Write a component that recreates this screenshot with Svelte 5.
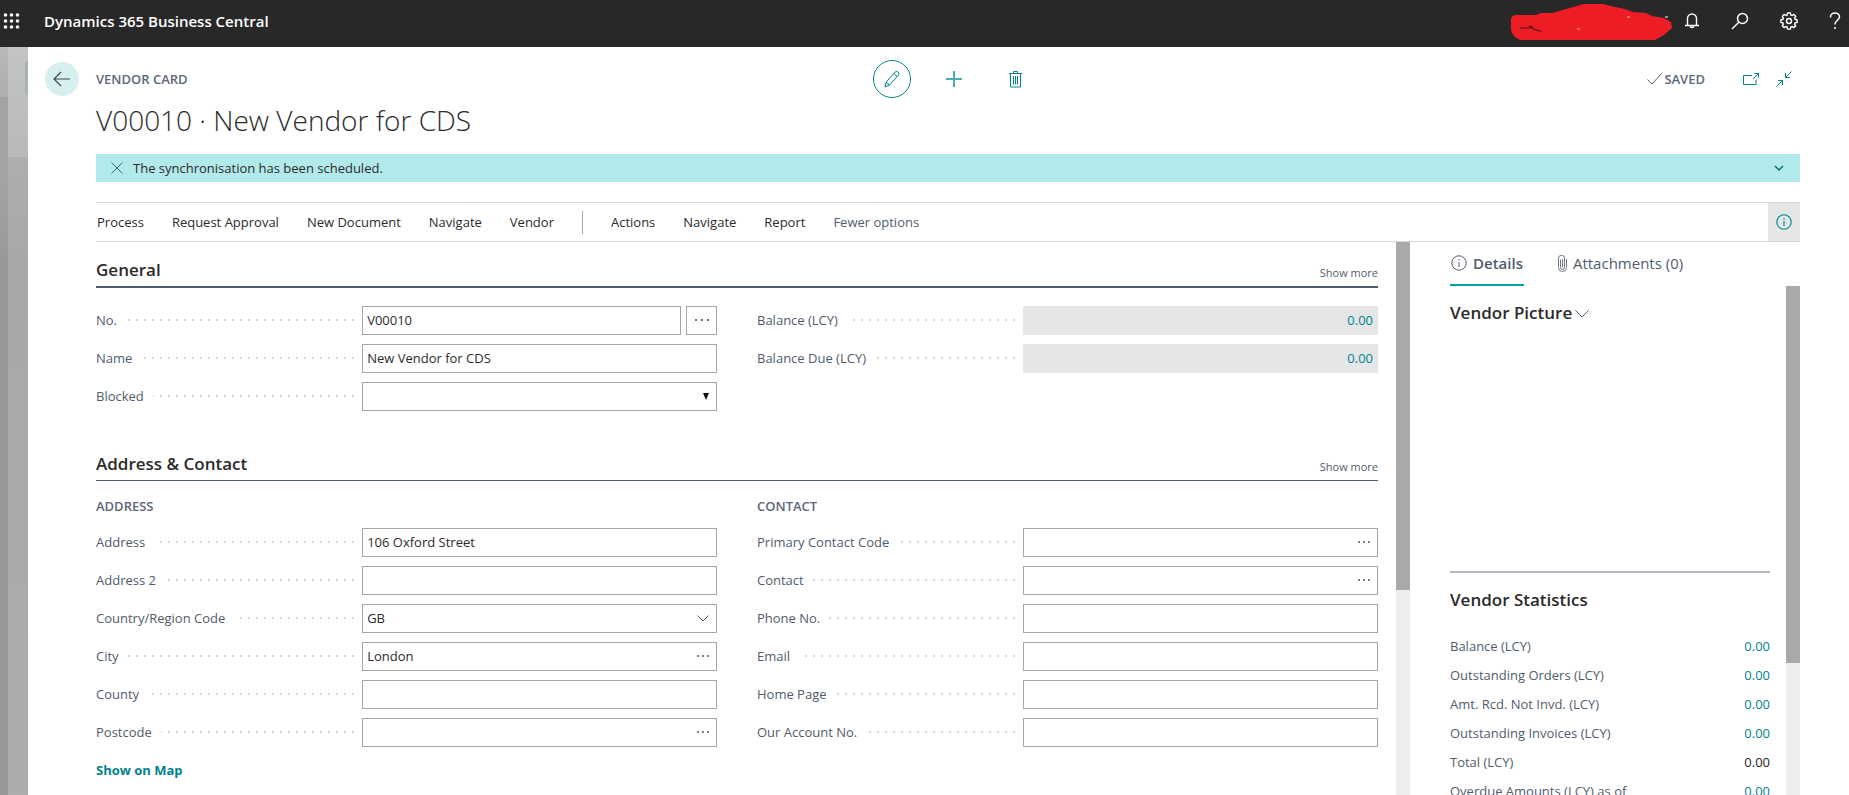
<script>
  let noticeOpen = true;
  let activeTab = 'details';

  const cardMenus = ['Process', 'Request Approval', 'New Document', 'Navigate', 'Vendor'];
  const pageMenus = ['Actions', 'Navigate', 'Report'];

  const sections = [
    {
      title: 'General',
      strong: true,
      groups: [
        {
          fields: [
            { id: 'no', label: 'No.', value: 'V00010', assist: 'outside' },
            { id: 'name', label: 'Name', value: 'New Vendor for CDS' },
            { id: 'blocked', label: 'Blocked', type: 'select' }
          ]
        },
        {
          fields: [
            { id: 'balance', label: 'Balance (LCY)', value: '0.00', type: 'amount' },
            { id: 'balance-due', label: 'Balance Due (LCY)', value: '0.00', type: 'amount' }
          ]
        }
      ]
    },
    {
      title: 'Address & Contact',
      groups: [
        {
          title: 'Address',
          fields: [
            { id: 'address', label: 'Address', value: '106 Oxford Street' },
            { id: 'address2', label: 'Address 2', value: '' },
            { id: 'country', label: 'Country/Region Code', value: 'GB', assist: 'drop' },
            { id: 'city', label: 'City', value: 'London', assist: 'dots' },
            { id: 'county', label: 'County', value: '' },
            { id: 'postcode', label: 'Postcode', value: '', assist: 'dots' }
          ],
          link: 'Show on Map'
        },
        {
          title: 'Contact',
          fields: [
            { id: 'primary-contact', label: 'Primary Contact Code', value: '', assist: 'dots' },
            { id: 'contact', label: 'Contact', value: '', assist: 'dots' },
            { id: 'phone', label: 'Phone No.', value: '' },
            { id: 'email', label: 'Email', value: '' },
            { id: 'home-page', label: 'Home Page', value: '' },
            { id: 'our-account', label: 'Our Account No.', value: '' }
          ]
        }
      ]
    }
  ];

  const statistics = [
    { label: 'Balance (LCY)', value: '0.00' },
    { label: 'Outstanding Orders (LCY)', value: '0.00' },
    { label: 'Amt. Rcd. Not Invd. (LCY)', value: '0.00' },
    { label: 'Outstanding Invoices (LCY)', value: '0.00' },
    { label: 'Total (LCY)', value: '0.00', total: true },
    { label: 'Overdue Amounts (LCY) as of', value: '0.00' }
  ];
</script>

<div class="app">
  <header class="topbar">
    <button class="icon-btn waffle" aria-label="App launcher">
      <svg width="17" height="17" viewBox="0 0 17 17" fill="#fff">
        {#each [2, 8, 14] as y}
          {#each [2, 8, 14] as x}
            <circle cx={x + 0.5} cy={y} r="1.8" />
          {/each}
        {/each}
      </svg>
    </button>
    <a class="topbar__title" href="#home">Dynamics 365 Business Central</a>
    <div class="topbar__tools">
      <svg class="scribble" width="162" height="38" viewBox="0 0 162 38">
        <path fill="#ee1c25" d="M1 15q1-4 5-4h20l5-2h11l18-5 14-4h19l12 3 10 2 8 3 13 1 6 3 12 2 7 4 1 6-8 7-9 5-13 2h-18l-6-2-12 1-11 2H37l-9-3H10q-8-4-9-10z" transform="translate(0 2)" />
        <path d="M10 26h12l-3-2 4 1v2l6 2h3" stroke="#4a1518" fill="none" />
        <path d="M117 15h3M67 27h3" stroke="#f7b9a0" fill="none" />
        <path d="M155 15h3" stroke="#fff" fill="none" />
      </svg>
      <button class="icon-btn" aria-label="Notifications">
        <svg width="16" height="18" viewBox="0 0 16 18" fill="none" stroke="#fff" stroke-width="1.4">
          <path d="M1 13.500h14M3.500 13.500V6.500a4.500 4.500 0 0 1 9 0v7M6 14.500q2 2 4 0" />
        </svg>
      </button>
      <button class="icon-btn" aria-label="Search">
        <svg width="18" height="18" viewBox="0 0 18 18" fill="none" stroke="#fff" stroke-width="1.500">
          <circle cx="11.500" cy="6.500" r="5" />
          <path d="M8 10L1 17" />
        </svg>
      </button>
      <button class="icon-btn" aria-label="Settings">
        <svg width="18" height="18" viewBox="0 0 18 18" fill="none" stroke="#fff" stroke-width="1.4">
          <path d="M7.600 1h2.800l.4 2 1.300.5L13.800 2.400l1.900 1.900-1.100 1.700.5 1.300 2 .4v2.700l-2 .4-.5 1.300 1.100 1.700-1.900 1.900-1.700-1.100-1.300.5-.4 2H7.600l-.4-2-1.300-.5-1.700 1.100-1.900-1.900 1.100-1.700-.5-1.300-2-.4V7.700l2-.4.5-1.300-1.100-1.700 1.900-1.900 1.700 1.100 1.300-.5z" />
          <circle cx="9" cy="9" r="2.500" />
        </svg>
      </button>
      <button class="icon-btn" aria-label="Help">
        <svg width="12" height="18" viewBox="0 0 12 18" fill="none" stroke="#fff" stroke-width="1.500">
          <path d="M1.500 5.500V5a4.500 4 0 0 1 9 0c0 3-4.500 3.500-4.500 7v.5M6 15v2" />
        </svg>
      </button>
    </div>
  </header>

  <div class="stage">
    <div class="layer layer--far"></div>
    <div class="layer layer--near"><span class="layer__circle"></span></div>

    <main class="sheet">
      <div class="heading">
        <button class="icon-btn back" aria-label="Back">
          <svg width="18" height="16" viewBox="0 0 18 16" fill="none" stroke="#3b4a4b" stroke-width="1.200">
            <path d="M17 8H1M8 1L1 8l7 7" />
          </svg>
        </button>
        <span class="caption">Vendor Card</span>
        <div class="heading__actions">
          <button class="icon-btn edit" aria-label="Edit">
            <svg width="16" height="18" viewBox="0 0 16 18" fill="none" stroke="#008489">
              <path d="M1 17l1.200-5L11 2.200q1.500-1.600 3.200-.2t.2 3.200L5.500 15zM9.800 3.500l3.400 3M2.200 12l3.300 3" />
            </svg>
          </button>
          <button class="icon-btn" aria-label="New">
            <svg width="16" height="16" viewBox="0 0 16 16" fill="none" stroke="#4fadb0" stroke-width="2">
              <path d="M0 8h16M8 0v16" />
            </svg>
          </button>
          <button class="icon-btn" aria-label="Delete">
            <svg width="13" height="17" viewBox="0 0 13 17" fill="none" stroke="#008489">
              <path d="M0 2.500h13M4.500 2.500v-2h4v2M1.500 3v13h10V3M4.500 5v8.500M6.500 5v8.500M8.500 5v8.500" />
            </svg>
          </button>
        </div>
        <div class="heading__status">
          <svg width="15" height="12" viewBox="0 0 15 12" fill="none" stroke="#505c6d">
            <path d="M.5 6.500l4.500 4.500L14.500.5" />
          </svg>
          <span class="caption">Saved</span>
          <button class="icon-btn popout" aria-label="Open in new window">
            <svg width="16" height="13" viewBox="0 0 16 13" fill="none" stroke="#008489">
              <path d="M9 2.500H.5v9h12.500V6.500M10 6l5-5M11.500.5h4v4" />
            </svg>
          </button>
          <button class="icon-btn" aria-label="Collapse">
            <svg width="16" height="16" viewBox="0 0 16 16" fill="none" stroke="#008489">
              <path d="M15.500.5L9.500 6.500M9.500 2v4.500H14M.5 15.500l6-6M2 9.500h4.500V14" />
            </svg>
          </button>
        </div>
      </div>

      <div class="body">
        <h1>V00010 · New Vendor for CDS</h1>

        {#if noticeOpen}
          <div class="notice">
            <button class="icon-btn" aria-label="Dismiss" on:click={() => noticeOpen = false}>
              <svg width="12" height="12" viewBox="0 0 12 12" stroke="#4a6365">
                <path d="M.5.5l11 11M11.500.5l-11 11" />
              </svg>
            </button>
            <span class="notice__text">The synchronisation has been scheduled.</span>
            <button class="icon-btn" aria-label="Expand">
              <svg width="10" height="7" viewBox="0 0 10 7" fill="none" stroke="#00666d" stroke-width="1.400">
                <path d="M1 1l4 4 4-4" />
              </svg>
            </button>
          </div>
        {/if}

        <nav class="actions">
          {#each cardMenus as menu}
            <button class="menu">{menu}</button>
          {/each}
          <span class="actions__divider"></span>
          {#each pageMenus as menu}
            <button class="menu">{menu}</button>
          {/each}
          <button class="menu menu--muted">Fewer options</button>
          <button class="icon-btn info" aria-label="Toggle FactBox">
            <svg width="16" height="16" viewBox="0 0 16 16" fill="none" stroke="#008489" stroke-width="1.100">
              <circle cx="8" cy="8" r="7.200" />
              <path d="M8 7v5M8 4v1.500" />
            </svg>
          </button>
        </nav>

        <div class="columns">
          <form class="card" on:submit|preventDefault>
            {#each sections as section}
              <section class="fasttab">
                <div class="fasttab__head" class:fasttab__head--strong={section.strong}>
                  <h2>{section.title}</h2>
                  <button type="button" class="more">Show more</button>
                </div>
                <div class="groups">
                  {#each section.groups as group}
                    <div class="group">
                      {#if group.title}
                        <h3 class="caption group__title">{group.title}</h3>
                      {/if}
                      {#each group.fields as field}
                        <div class="field">
                          <label for={field.id}>{field.label}</label>
                          <div class="control">
                            {#if field.type === 'select'}
                              <select id={field.id} class="box"><option></option></select>
                              <svg class="inset" width="6" height="7" viewBox="0 0 6 7"><path d="M0 0h6L3 7z" fill="#111" /></svg>
                            {:else}
                              <input
                                id={field.id}
                                class="box"
                                class:box--amount={field.type === 'amount'}
                                readonly={field.type === 'amount'}
                                type="text"
                                value={field.value}
                              />
                            {/if}
                            {#if field.assist === 'outside'}
                              <button type="button" class="icon-btn assist" aria-label="Assist edit">
                                <svg width="14" height="2" viewBox="0 0 14 2" fill="#444"><circle cx="1" cy="1" r="1" /><circle cx="7" cy="1" r="1" /><circle cx="13" cy="1" r="1" /></svg>
                              </button>
                            {:else if field.assist === 'dots'}
                              <button type="button" class="icon-btn inset" aria-label="Look up">
                                <svg width="12" height="2" viewBox="0 0 12 2" fill="#555"><circle cx="1" cy="1" r="1" /><circle cx="6" cy="1" r="1" /><circle cx="11" cy="1" r="1" /></svg>
                              </button>
                            {:else if field.assist === 'drop'}
                              <button type="button" class="icon-btn inset" aria-label="Open list">
                                <svg width="12" height="7" viewBox="0 0 12 7" fill="none" stroke="#555"><path d="M.5.5L6 6l5.500-5.500" /></svg>
                              </button>
                            {/if}
                          </div>
                        </div>
                      {/each}
                      {#if group.link}
                        <a class="map-link" href="#map">{group.link}</a>
                      {/if}
                    </div>
                  {/each}
                </div>
              </section>
            {/each}
          </form>

          <div class="scroll scroll--card"><div class="scroll__thumb"></div></div>

          <aside class="factbox">
            <div class="tabs">
              <button class="tab" class:tab--active={activeTab === 'details'} on:click={() => activeTab = 'details'}>
                <svg width="16" height="16" viewBox="0 0 16 16" fill="none" stroke="#505c6d">
                  <circle cx="8" cy="8" r="7.200" />
                  <path d="M8 7v5M8 4v1.500" />
                </svg>
                Details
              </button>
              <button class="tab" class:tab--active={activeTab === 'attachments'} on:click={() => activeTab = 'attachments'}>
                <svg width="9" height="17" viewBox="0 0 9 17" fill="none" stroke="#6f7988">
                  <path d="M8.500 4v8.500a4 4 0 0 1-8 0V3a2.800 2.500 0 0 1 6 0v9.500a2 2 0 0 1-4 0V4.500M4.500 4v8.500" />
                </svg>
                Attachments (0)
              </button>
            </div>
            <div class="factbox__main">
              <div class="factbox__parts">
                <section class="picture">
                  <h2>Vendor Picture</h2>
                  <svg width="14" height="8" viewBox="0 0 14 8" fill="none" stroke="#505c6d"><path d="M.5.5L7 7 13.500.5" /></svg>
                </section>
                <section class="stats">
                  <h2>Vendor Statistics</h2>
                  <dl>
                    {#each statistics as row}
                      <div class="stats__row">
                        <dt>{row.label}</dt>
                        <dd>
                          {#if row.total}
                            {row.value}
                          {:else}
                            <a href="#entries">{row.value}</a>
                          {/if}
                        </dd>
                      </div>
                    {/each}
                  </dl>
                </section>
              </div>
              <div class="scroll scroll--factbox"><div class="scroll__thumb"></div></div>
            </div>
          </aside>
        </div>
      </div>
    </main>
  </div>
</div>

<style>
  :global(body) {
    background: #fff;
  }

  .app {
    height: 100vh;
    display: flex;
    flex-direction: column;
    overflow: hidden;
    font-family: "Segoe UI", "Open Sans", "Noto Sans", sans-serif;
    font-size: 13px;
    line-height: 20px;
    color: #2b2b2b;
  }

  .app * {
    box-sizing: border-box;
  }

  button,
  input,
  select {
    font: inherit;
    color: inherit;
    margin: 0;
  }

  button {
    padding: 0;
    border: 0;
    background: none;
    cursor: pointer;
    white-space: nowrap;
  }

  a {
    color: #008489;
    text-decoration: none;
  }

  h1,
  h2,
  h3,
  dl,
  dd {
    margin: 0;
  }

  h2 {
    font-size: 17px;
    line-height: 24px;
    font-weight: 600;
  }

  svg {
    display: block;
    flex: none;
  }

  .icon-btn {
    display: flex;
    align-items: center;
    justify-content: center;
    flex: none;
  }

  .caption {
    font-size: 13px;
    font-weight: 600;
    text-transform: uppercase;
    color: #5c6778;
  }

  /* top bar */

  .topbar {
    display: flex;
    align-items: center;
    flex: none;
    height: 47px;
    padding: 0 8px 5px 3px;
    background: #282828;
  }

  .topbar__title {
    margin-left: 24px;
    font-size: 15px;
    font-weight: 600;
    color: #fff;
  }

  .topbar__tools {
    display: flex;
    align-items: center;
    gap: 31px;
    margin-left: auto;
  }

  .scribble {
    margin-right: -19px;
  }

  /* stacked pages behind the card */

  .stage {
    display: flex;
    flex: 1;
    min-height: 0;
  }

  .layer {
    flex: none;
    overflow: hidden;
  }

  .layer--far {
    width: 8px;
    background: linear-gradient(#b9b9b9, #aeaeae 50px, #a3a3a3 50px, #a5a5a5 120px, #989898 220px, #989898);
  }

  .layer--near {
    display: flex;
    justify-content: flex-end;
    width: 20px;
    padding-top: 14px;
    background: linear-gradient(#c4c4c4, #b9b9b9 110px, #aeaeae 110px, #a8a8a8 220px, #adadad);
  }

  .layer__circle {
    width: 3px;
    height: 34px;
    border-radius: 3px 0 0 3px;
    background: #a5b4b5;
  }

  .sheet {
    display: flex;
    flex-direction: column;
    flex: 1;
    min-width: 0;
    background: #fff;
  }

  /* page heading */

  .heading {
    display: grid;
    grid-template-columns: 34px 1fr auto 1fr;
    align-items: center;
    gap: 17px;
    padding: 13px 57px 0 17px;
  }

  .back {
    width: 34px;
    height: 34px;
    border-radius: 50%;
    background: #d8eff0;
  }

  .heading__actions {
    display: flex;
    align-items: center;
    gap: 47px;
    padding-left: 6px;
  }

  .edit {
    width: 38px;
    height: 38px;
    margin-right: -12px;
    border: 1px solid #008489;
    border-radius: 50%;
  }

  .heading__status {
    display: flex;
    align-items: center;
    justify-content: flex-end;
    gap: 2px;
  }

  .popout {
    margin: 0 15px 0 36px;
  }

  .body {
    display: flex;
    flex-direction: column;
    flex: 1;
    min-height: 0;
    padding: 0 49px 0 68px;
  }

  h1 {
    padding: 1px 0 13px;
    font-size: 28px;
    line-height: 42px;
    font-weight: 300;
  }

  .notice {
    display: flex;
    align-items: center;
    flex: none;
    gap: 10px;
    height: 28px;
    padding: 0 16px 0 15px;
    background: #b2e9eb;
  }

  .notice__text {
    flex: 1;
  }

  /* action bar */

  .actions {
    display: flex;
    align-items: center;
    flex: none;
    gap: 28px;
    height: 40px;
    margin-top: 20px;
    padding-left: 1px;
    border: solid #d3d5d8;
    border-width: 1px 0;
  }

  .actions__divider {
    width: 1px;
    height: 23px;
    background: #a6abb5;
  }

  .menu--muted {
    color: #505c6d;
  }

  .info {
    align-self: stretch;
    width: 32px;
    margin-left: auto;
    border-radius: 2px;
    background: #e5e6e8;
  }

  .columns {
    display: flex;
    flex: 1;
    min-height: 0;
  }

  /* card */

  .card {
    flex: 1;
    min-width: 0;
    overflow: hidden;
    padding: 12px 18px 0 0;
  }

  .fasttab {
    padding-bottom: 33px;
  }

  .fasttab__head {
    display: flex;
    align-items: center;
    justify-content: space-between;
    height: 33px;
    border-bottom: 1px solid #505c6d;
  }

  .fasttab__head--strong {
    height: 34px;
    border-bottom: 2px solid #505c6d;
  }

  .more {
    padding-top: 6px;
    font-size: 11px;
    color: #505c6d;
  }

  .groups {
    display: grid;
    grid-template-columns: 1fr 1fr;
    gap: 40px;
    padding-top: 13px;
  }

  .group__title {
    padding: 2px 0 7px;
  }

  .field {
    display: grid;
    grid-template-columns: 3fr 4fr;
    align-items: center;
    height: 38px;
  }

  label {
    display: flex;
    align-items: center;
    gap: 9px;
    padding-right: 8px;
    color: #505c6d;
    white-space: nowrap;
  }

  label::after {
    content: "";
    flex: 1;
    height: 2px;
    background: repeating-linear-gradient(to left, #d6d6d6 0 2px, transparent 2px 8px);
  }

  .control {
    position: relative;
    display: flex;
    gap: 5px;
    min-width: 0;
  }

  .box {
    flex: 1;
    min-width: 0;
    height: 29px;
    padding: 0 4px;
    border: 1px solid #a6a6a6;
    border-radius: 0;
    background: #fff;
    appearance: none;
  }

  .box--amount {
    border-color: #e5e6e8;
    background: #e5e6e8;
    color: #008489;
    text-align: right;
  }

  .assist {
    width: 31px;
    height: 29px;
    border: 1px solid #a6a6a6;
  }

  .inset {
    position: absolute;
    right: 8px;
    top: 0;
    bottom: 0;
    margin: auto 0;
    pointer-events: none;
  }

  .map-link {
    display: block;
    padding-top: 9px;
    font-weight: 700;
  }

  /* scroll bars */

  .scroll {
    flex: none;
    width: 14px;
    background: #eee;
  }

  .scroll__thumb {
    background: #a9a9a9;
  }

  .scroll--card .scroll__thumb {
    height: 63%;
  }

  .scroll--factbox .scroll__thumb {
    height: 74%;
  }

  /* fact box */

  .factbox {
    display: flex;
    flex-direction: column;
    flex: none;
    width: 390px;
    padding-left: 40px;
  }

  .tabs {
    display: flex;
    gap: 33px;
    height: 44px;
  }

  .tab {
    display: flex;
    align-items: center;
    gap: 6px;
    padding: 0 1px;
    border-bottom: 2px solid transparent;
    font-size: 15px;
    color: #505c6d;
  }

  .tab--active {
    border-bottom-color: #00a1a8;
    font-weight: 600;
  }

  .factbox__main {
    display: flex;
    flex: 1;
    min-height: 0;
  }

  .factbox__parts {
    flex: 1;
    overflow: hidden;
    padding-right: 16px;
  }

  .picture {
    display: flex;
    align-items: flex-start;
    gap: 3px;
    height: 287px;
    padding-top: 15px;
    border-bottom: 2px solid #b5b9c2;
  }

  .picture svg {
    margin-top: 9px;
  }

  .stats h2 {
    padding: 15px 0 20px;
  }

  .stats__row {
    display: flex;
    justify-content: space-between;
    line-height: 29px;
    color: #505c6d;
  }

  dd {
    color: #212121;
  }
</style>
